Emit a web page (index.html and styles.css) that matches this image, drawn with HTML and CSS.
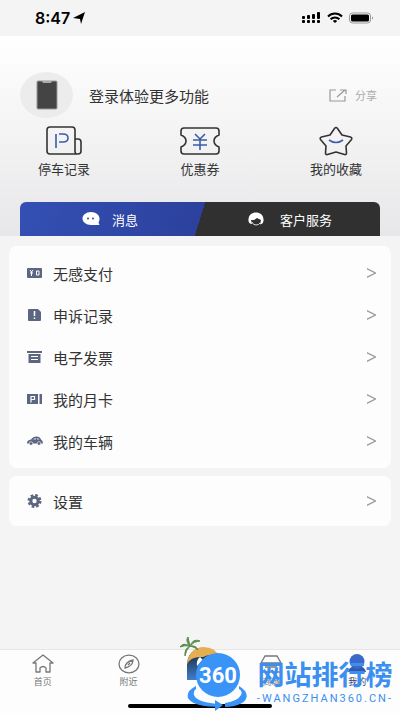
FILE: index.html
```html
<!DOCTYPE html>
<html lang="zh-CN">
<head>
  <meta charset="UTF-8" />
  <meta name="viewport" content="width=device-width, initial-scale=1.0"/>
  <title>我的</title>
  <link rel="stylesheet" href="styles.css">
</head>
<body>
  <div class="status-bar">
    <div class="time">
      <span>8:47</span>
      <svg width="12" height="12" viewBox="0 0 12 12"><path d="M0 6 12 0 8 12 7 7Z" fill="#000"/></svg>
    </div>
    <div class="signals">
      <svg width="19" height="12" viewBox="0 0 19 12">
        <g fill="#000">
          <rect x="0" y="4" width="3" height="3" rx="1"/><rect x="5" y="3" width="3" height="4" rx="1"/>
          <rect x="10" y="2" width="3" height="5" rx="1"/><rect x="15" y="0" width="3" height="7" rx="1"/>
          <rect x="0" y="8" width="3" height="3" rx="1"/><rect x="5" y="8" width="3" height="3" rx="1"/>
          <rect x="10" y="8" width="3" height="3" rx="1"/><rect x="15" y="8" width="3" height="3" rx="1"/>
        </g>
      </svg>
      <svg width="16" height="12" viewBox="0 0 16 12" fill="none" stroke="#000" stroke-width="2">
        <path d="M1 4.5C5 .5 11 .5 15 4.5M3.6 7.2C6 4.800 10 4.800 12.400 7.200"/>
        <path d="M8 11 5.800 8.900Q8 7.200 10.200 8.900Z" fill="#000" stroke="none"/>
      </svg>
      <svg width="25" height="12" viewBox="0 0 25 12">
        <rect x=".5" y="1" width="21" height="10" rx="3" fill="none" stroke="#999"/>
        <rect x="2" y="2.500" width="18" height="7" rx="1.500" fill="#000"/>
        <path d="M23 4.500Q25 6 23 7.500Z" fill="#888"/>
      </svg>
    </div>
  </div>

  <header class="profile">
    <div class="user">
      <div class="avatar">
        <svg width="22" height="30" viewBox="0 0 22 30">
          <rect x="1" y="1" width="20" height="28" rx="1" fill="#444" stroke="#999"/>
          <path d="M6 1h10l-1 2H7Z" fill="#aaa"/>
        </svg>
      </div>
      <a class="login" href="#">登录体验更多功能</a>
      <a class="share" href="#">
        <svg width="18" height="13" viewBox="0 0 18 13" fill="none" stroke="#999" stroke-width="1.200">
          <path d="M7 1H1v11h15V7M8 8l8-7M11 1h6v4"/>
        </svg>
        <span>分享</span>
      </a>
    </div>

    <div class="shortcuts">
      <a href="#">
        <svg width="36" height="30" viewBox="0 0 36 30" fill="none" stroke="#333" stroke-width="1.600" stroke-linejoin="round">
          <path d="M30 28H4q-3 0-3-3V4q0-3 3-3h22q3 0 3 3v9h3q3 0 3 3v9q0 3-3 3h-1q-2 0-2-3V13"/>
          <path d="M10 22V8M13 8h4q5 0 5 4t-5 4h-4" stroke="#3c5ca8"/>
        </svg>
        <span>停车记录</span>
      </a>
      <a href="#">
        <svg width="40" height="30" viewBox="0 0 40 30" fill="none" stroke="#333" stroke-width="1.600" stroke-linejoin="round">
          <path d="M4 2h32q3 0 3 3v4q-5 2-5 6t5 6v4q0 3-3 3H4q-3 0-3-3v-4q5-2 5-6T1 9V5q0-3 3-3Z"/>
          <path d="m15 8 5 5 5-5M13 14h14M13 19h14M20 13v11" stroke="#3c5ca8"/>
        </svg>
        <span>优惠券</span>
      </a>
      <a href="#">
        <svg width="34" height="30" viewBox="0 0 34 30" fill="none" stroke="#333" stroke-width="1.600" stroke-linejoin="round">
          <path d="M15.500 2.500q1.500-2 3 0l4.500 6.500 8.500 2q2 .8 1 2.500l-5.500 6.500.5 7q0 2-2 1.500L17 26l-8.500 2.500q-2 .5-2-1.500l.5-7-5.500-6.500q-1-1.700 1-2.500L11 9Z"/>
          <path d="M10 14q7 5 14 0" stroke="#3c5ca8"/>
        </svg>
        <span>我的收藏</span>
      </a>
    </div>

    <div class="tabs">
      <button class="tab tab-msg">
        <svg width="18" height="14" viewBox="0 0 18 14">
          <path d="M9 0c5 0 8.500 3 8.500 6.500 0 2-.5 3-1 4l1 2.500H9C4 13 .5 10 .5 6.500S4 0 9 0Z" fill="#fff"/>
          <circle cx="6" cy="6.500" r="1" fill="#2d4590"/><circle cx="11" cy="6.500" r="1" fill="#2d4590"/>
        </svg>
        <span>消息</span>
      </button>
      <button class="tab tab-service">
        <svg width="16" height="14" viewBox="0 0 16 14">
          <path d="M.5 9C0 3 4 .5 8 .5S16 3 15.500 9Q15 12 12 12.500L13 8 9 6 6 8 3 8 4 12Q1 12 .5 9Z" fill="#fff"/>
          <path d="M4 10q1 3 4 3t4-2" fill="none" stroke="#ddd"/>
        </svg>
        <span>客户服务</span>
      </button>
    </div>
  </header>

  <main>
    <nav class="card">
      <a class="row" href="#">
        <svg width="16" height="14" viewBox="0 0 16 14">
          <rect x="0" y="2" width="15" height="10" rx="1" fill="#5d6680"/>
          <path d="m3 4 1.500 2L6 4M3 7h3M4.500 6v4M9.500 5h2.500v4H9.500Z" fill="none" stroke="#fff"/>
        </svg>
        <span>无感支付</span>
        <i class="arrow"></i>
      </a>
      <a class="row" href="#">
        <svg width="16" height="14" viewBox="0 0 16 14">
          <path d="M2 1h9l3 3v8q0 1-1 1H2q-1 0-1-1V2q0-1 1-1Z" fill="#5d6680"/>
          <path d="M7.500 3v5M7.500 9.500v1.500" stroke="#fff" stroke-width="1.500"/>
        </svg>
        <span>申诉记录</span>
        <i class="arrow"></i>
      </a>
      <a class="row" href="#">
        <svg width="16" height="14" viewBox="0 0 16 14">
          <path d="M0 1h15v2H0ZM1.500 4h12v9h-12Z" fill="#5d6680"/>
          <path d="M4 6.500h7M4 9.500h7" stroke="#fff"/>
        </svg>
        <span>电子发票</span>
        <i class="arrow"></i>
      </a>
      <a class="row" href="#">
        <svg width="16" height="14" viewBox="0 0 16 14">
          <path d="M0 2h11v10H0ZM12.500 2H15v10h-2.500Z" fill="#5d6680"/>
          <path d="M4 10.500V4.500h3.500v3H4" fill="none" stroke="#fff" stroke-width="1.200"/>
        </svg>
        <span>我的月卡</span>
        <i class="arrow"></i>
      </a>
      <a class="row" href="#">
        <svg width="16" height="14" viewBox="0 0 16 14">
          <path d="M0 9Q0 6 4 5.500 6 2.500 9.500 2.500q3.500 0 4.500 3 2 1 2 4H0Z" fill="#5d6680"/>
          <circle cx="4" cy="9.500" r="1.800" fill="#5d6680" stroke="#fff" stroke-width=".6"/>
          <circle cx="12" cy="9.500" r="1.800" fill="#5d6680" stroke="#fff" stroke-width=".6"/>
          <path d="M6 5.500Q7 4 9 4v1.500ZM10 4q2 0 2.500 1.500H10Z" fill="#ccd"/>
        </svg>
        <span>我的车辆</span>
        <i class="arrow"></i>
      </a>
    </nav>

    <nav class="card">
      <a class="row" href="#">
        <svg width="16" height="14" viewBox="0 0 16 14">
          <circle cx="7.500" cy="7" r="3.700" fill="none" stroke="#5d6680" stroke-width="3"/>
          <circle cx="7.500" cy="7" r="5.800" fill="none" stroke="#5d6680" stroke-width="2.400" stroke-dasharray="2.600 1.955"/>
        </svg>
        <span>设置</span>
        <i class="arrow"></i>
      </a>
    </nav>
  </main>

  <footer>
    <nav class="tab-bar">
      <a href="#">
        <svg width="22" height="20" viewBox="0 0 22 20" fill="none" stroke="#777" stroke-width="1.300" stroke-linejoin="round">
          <path d="m1 9 10-8 10 8h-3v9h-4v-4q-3-3-6 0v4H4V9Z"/>
        </svg>
        <span>首页</span>
      </a>
      <a href="#">
        <svg width="22" height="20" viewBox="0 0 22 20" fill="none" stroke="#777" stroke-width="1.300">
          <ellipse cx="11" cy="10" rx="10" ry="8.800"/>
          <path d="M7 14q0-6 8-8 0 6-8 8ZM10 11l2-2"/>
        </svg>
        <span>附近</span>
      </a>
      <a class="center" href="#" aria-label="热门">
        <svg width="42" height="46" viewBox="0 0 42 46">
          <defs>
            <linearGradient id="sea" x2="0" y2="1"><stop offset=".3" stop-color="#243a5c"/><stop offset="1" stop-color="#3f7fcb"/></linearGradient>
          </defs>
          <path d="M8 44V28Q9 13 25 12q14 1 15 15v17Z" fill="url(#sea)"/>
          <path d="M21 21q-4 3-3 9l6-6Z" fill="#fff"/>
          <path d="M8 28Q10 12 24 11q13 0 16 10-8-4-16 0Q12 20 8 28Z" fill="#e5ae50"/>
          <path d="M11 10Q4 6 1 11q5-2 10-1ZM11 10Q5 13 6 20q1-6 5-10ZM11 10Q6 5 9 1q1 5 2 9ZM11 10q3-8 10-5-6 0-10 5ZM11 10q6-1 8 4-3-3-8-4Z" fill="#5b8c4e" stroke="#5b8c4e"/>
        </svg>
      </a>
      <a href="#">
        <svg width="22" height="20" viewBox="0 0 22 20" fill="none" stroke="#777" stroke-width="1.300">
          <path d="M1 9 5 2h12l4 7v9H1ZM1 9h20M5 13h12"/>
        </svg>
        <span>商城</span>
      </a>
      <a class="active" href="#">
        <svg width="22" height="20" viewBox="0 0 22 20">
          <path d="M2 18q1-6 9-6t9 6Z" fill="#3458a8"/><circle cx="11" cy="7.500" r="7.500" fill="#3c69c7"/>
          <path d="M6 9q5 4 10 0" fill="none" stroke="#6f9be8"/>
        </svg>
        <span>我的</span>
      </a>
    </nav>
    <div class="home-line"></div>
  </footer>

  <div class="watermark">
    <svg width="60" height="62" viewBox="0 0 60 62">
      <path d="M9 35Q-1 40 1 47q5 9 33 9v-3Q10 52 7 44q-1-4 2-6Z" fill="#3a94f7"/>
      <path d="M52 35q10 6 7 13-4 7-21 8v-4q13-2 16-8 2-4-2-6Z" fill="#3a94f7"/>
      <path d="m28 49 8 5-8 6Z" fill="#3a94f7"/>
      <circle cx="31" cy="24" r="22" fill="#3a94f7"/>
      <text class="logo-text" x="31" y="32" text-anchor="middle">360</text>
    </svg>
    <div class="site">
      <strong>网站排行榜</strong>
      <small>-WANGZHAN360.CN-</small>
    </div>
  </div>
</body>
</html>
```
FILE: styles.css
```css
* {
  margin: 0;
  padding: 0;
  box-sizing: border-box;
}

body {
  position: relative;
  min-height: 100vh;
  display: flex;
  flex-direction: column;
  font-family: "Noto Sans CJK SC", sans-serif;
  font-size: 15px;
  color: #333;
  background-color: #f4f4f4;
}

a {
  color: inherit;
  text-decoration: none;
}

svg {
  display: block;
  flex-shrink: 0;
}

.status-bar {
  height: 36px;
  padding: 0 26px 0 35px;
  display: flex;
  align-items: center;
  justify-content: space-between;
}

.time, .signals {
  display: flex;
  align-items: center;
  gap: 3px;
}

.time {
  font-family: Inter, sans-serif;
  font-weight: 600;
  font-size: 16px;
  color: #000;
}

.signals {
  gap: 6px;
}

.profile {
  padding: 36px 20px 0;
  background: linear-gradient(#fff, #e7e7e9);
}

.user {
  display: flex;
  align-items: center;
}

.avatar {
  width: 53px;
  height: 46px;
  border-radius: 50%;
  background-color: #ececec;
  display: flex;
  align-items: center;
  justify-content: center;
}

.login {
  margin-left: 16px;
}

.share {
  margin-left: auto;
  padding-right: 3px;
  display: flex;
  align-items: center;
  gap: 8px;
  font-size: 11px;
  color: #aaa;
}

.shortcuts {
  display: flex;
  justify-content: space-between;
  padding: 8px 18px 0;
  font-size: 13px;
}

.shortcuts a {
  display: flex;
  flex-direction: column;
  align-items: center;
  gap: 3px;
  line-height: 20px;
}

.tabs {
  display: flex;
  height: 34px;
  margin-top: 23px;
  border-radius: 6px 6px 0 0;
  background: linear-gradient(107deg, #3450b4, #2c419d 50%, #303030 50%);
}

.tab {
  flex: 1;
  display: flex;
  align-items: center;
  justify-content: center;
  gap: 12px;
  padding: 0;
  border: none;
  background: none;
  font-family: inherit;
  font-size: 13px;
  color: #fff;
  cursor: pointer;
}

.tab-service {
  gap: 16px;
}

main {
  flex: 1;
  padding: 10px 9px;
}

.card {
  padding: 6px 15px 6px 18px;
  margin-bottom: 8px;
  border-radius: 8px;
  background-color: #fdfdfd;
}

.card + .card {
  padding-top: 4px;
  padding-bottom: 4px;
}

.row {
  display: flex;
  align-items: center;
  gap: 10px;
  height: 42px;
}

.arrow {
  width: 9px;
  height: 10px;
  margin-left: auto;
  background-color: #999;
  clip-path: polygon(0 0, 100% 45%, 100% 55%, 0 100%, 0 85%, 80% 50%, 0 15%);
}

footer {
  height: 64px;
  background-color: #fdfdfd;
  border-top: 1px solid #e6e6e6;
}

.tab-bar {
  display: grid;
  grid-template-columns: 3fr 3fr 2fr 3fr 3fr;
  height: 54px;
  font-size: 9px;
  color: #777;
}

.tab-bar a {
  display: flex;
  flex-direction: column;
  align-items: center;
  gap: 2px;
  height: 54px;
  padding-top: 4px;
  line-height: 12px;
}

.tab-bar .center {
  justify-content: flex-end;
  padding: 0 0 22px;
}

.tab-bar .active {
  color: #333f70;
}

.home-line {
  width: 36%;
  height: 4px;
  margin: 0 auto;
  border-radius: 2px;
  background-color: #000;
}

.watermark {
  position: absolute;
  right: 7px;
  bottom: 0;
  display: flex;
  align-items: center;
  gap: 10px;
  color: #3a8ff0;
}

.logo-text {
  font-family: "Liberation Sans Narrow", Roboto, sans-serif;
  font-size: 22px;
  font-weight: 700;
  fill: #fff;
}

.site {
  display: flex;
  flex-direction: column;
  align-items: center;
  gap: 1px;
}

.site strong {
  font-size: 27px;
  line-height: 32px;
}

.site small {
  font-family: Roboto, sans-serif;
  font-size: 11px;
  line-height: 16px;
  letter-spacing: 2px;
}
```
